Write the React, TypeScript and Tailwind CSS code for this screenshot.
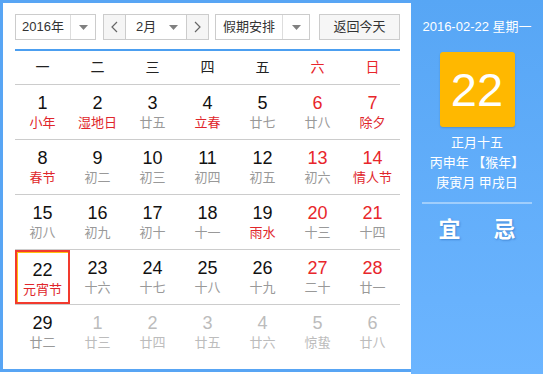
import React from 'react';

type Day = {
  num: number;
  lunar: string;
  weekend?: boolean;
  festival?: boolean;
  other?: boolean;
  selected?: boolean;
};

const weekdays = ['一', '二', '三', '四', '五', '六', '日'];

const rows: Day[][] = [
  [
    { num: 1, lunar: '小年', festival: true },
    { num: 2, lunar: '湿地日', festival: true },
    { num: 3, lunar: '廿五' },
    { num: 4, lunar: '立春', festival: true },
    { num: 5, lunar: '廿七' },
    { num: 6, lunar: '廿八', weekend: true },
    { num: 7, lunar: '除夕', weekend: true, festival: true },
  ],
  [
    { num: 8, lunar: '春节', festival: true },
    { num: 9, lunar: '初二' },
    { num: 10, lunar: '初三' },
    { num: 11, lunar: '初四' },
    { num: 12, lunar: '初五' },
    { num: 13, lunar: '初六', weekend: true },
    { num: 14, lunar: '情人节', weekend: true, festival: true },
  ],
  [
    { num: 15, lunar: '初八' },
    { num: 16, lunar: '初九' },
    { num: 17, lunar: '初十' },
    { num: 18, lunar: '十一' },
    { num: 19, lunar: '雨水', festival: true },
    { num: 20, lunar: '十三', weekend: true },
    { num: 21, lunar: '十四', weekend: true },
  ],
  [
    { num: 22, lunar: '元宵节', festival: true, selected: true },
    { num: 23, lunar: '十六' },
    { num: 24, lunar: '十七' },
    { num: 25, lunar: '十八' },
    { num: 26, lunar: '十九' },
    { num: 27, lunar: '二十', weekend: true },
    { num: 28, lunar: '廿一', weekend: true },
  ],
  [
    { num: 29, lunar: '廿二' },
    { num: 1, lunar: '廿三', other: true },
    { num: 2, lunar: '廿四', other: true },
    { num: 3, lunar: '廿五', other: true },
    { num: 4, lunar: '廿六', other: true },
    { num: 5, lunar: '惊蛰', other: true },
    { num: 6, lunar: '廿八', other: true },
  ],
];

function Caret() {
  return (
    <svg width="9" height="5" viewBox="0 0 9 5">
      <path d="M0 0 L9 0 L4.5 5 Z" fill="#808080" />
    </svg>
  );
}

function Chevron({ dir }: { dir: 'left' | 'right' }) {
  return (
    <svg width="7" height="12" viewBox="0 0 7 12">
      <path
        d={dir === 'left' ? 'M6 1 L1 6 L6 11' : 'M1 1 L6 6 L1 11'}
        fill="none"
        stroke="#666"
        strokeWidth="1.2"
      />
    </svg>
  );
}

function DayCell({ day }: { day: Day }) {
  let numColor = 'text-[#111]';
  if (day.weekend) numColor = 'text-[#e8262b]';
  if (day.other) numColor = 'text-[#bcbcbc]';

  let lunarColor = 'text-[#999]';
  if (day.festival) lunarColor = 'text-[#e0262b]';
  if (day.other) lunarColor = 'text-[#bcbcbc]';

  return (
    <div
      className={`flex flex-col items-center pt-[8px] ${
        day.selected ? 'border-2 border-[#f23a2e] shadow-[inset_1px_1px_0_0_#ffc20e] pt-[6px]' : ''
      }`}
    >
      <span className={`text-[18px] leading-[21px] ${numColor}`}>{day.num}</span>
      <span className={`text-[13px] leading-[18px] ${lunarColor}`}>{day.lunar}</span>
    </div>
  );
}

export default function App() {
  return (
    <div
      className="w-[543px] h-[374px] flex bg-white"
      style={{ fontFamily: '"Liberation Sans", "Noto Sans CJK SC", sans-serif' }}
    >
      {/* Left: calendar */}
      <div className="w-[411px] h-[372px] border-l-[3px] border-t-[3px] border-b-[3px] border-[#58a5f4] pl-[12px] pt-[11px]">
        <div className="w-[385px]">
          {/* Toolbar */}
          <div className="flex items-center h-[26px] text-[13px] text-[#333]">
            <div className="flex h-full border border-[#ccc] bg-white">
              <div className="w-[54px] flex items-center justify-center">2016年</div>
              <div className="w-[25px] border-l border-[#ddd] flex items-center justify-center">
                <Caret />
              </div>
            </div>

            <div className="flex h-full border border-[#ccc] ml-[7px]">
              <div className="w-[22px] bg-[#f5f5f5] flex items-center justify-center border-r border-[#ccc]">
                <Chevron dir="left" />
              </div>
              <div className="w-[60px] bg-white flex items-center">
                <span className="ml-[10px]">2月</span>
                <span className="ml-auto mr-[8px] flex">
                  <Caret />
                </span>
              </div>
              <div className="w-[22px] bg-[#f5f5f5] flex items-center justify-center border-l border-[#ccc]">
                <Chevron dir="right" />
              </div>
            </div>

            <div className="flex h-full border border-[#ccc] ml-[6px] bg-white">
              <div className="w-[66px] flex items-center justify-center">假期安排</div>
              <div className="w-[27px] border-l border-[#ddd] flex items-center justify-center">
                <Caret />
              </div>
            </div>

            <div className="h-full w-[82px] ml-[9px] border border-[#ccc] bg-[#f6f6f6] flex items-center justify-center">
              返回今天
            </div>
          </div>

          <div className="h-[2px] bg-[#4c9ff0] mt-[9px]" />

          {/* Weekday header */}
          <div className="grid grid-cols-7 h-[34px] border-b border-[#ccc] text-[14px] items-center">
            {weekdays.map((w, i) => (
              <div
                key={w}
                className={`text-center ${i >= 5 ? 'text-[#e8262b]' : 'text-[#222]'}`}
              >
                {w}
              </div>
            ))}
          </div>

          {/* Days */}
          {rows.map((row, ri) => (
            <div
              key={ri}
              className={`grid grid-cols-7 h-[55px] ${
                ri < rows.length - 1 ? 'border-b border-[#ccc]' : ''
              }`}
            >
              {row.map((d, di) => (
                <DayCell key={di} day={d} />
              ))}
            </div>
          ))}
        </div>
      </div>

      {/* Right: today panel */}
      <div className="w-[132px] h-full bg-gradient-to-b from-[#57a6f5] to-[#6cb5ff] flex flex-col items-center text-white">
        <div className="mt-[18px] text-[13px] leading-[18px]">2016-02-22 星期一</div>
        <div className="mt-[16px] w-[75px] h-[75px] rounded-[3px] bg-[#ffb800] shadow-[0_1px_2px_rgba(0,0,0,0.15)] flex items-center justify-center">
          <span className="text-[47px] leading-none">22</span>
        </div>
        <div className="mt-[6px] text-[13px] leading-[20px] text-center">
          <div>正月十五</div>
          <div>丙申年 【猴年】</div>
          <div>庚寅月 甲戌日</div>
        </div>
        <div className="mt-[9px] w-[110px] h-[2px] bg-white/40" />
        <div className="mt-[12px] flex gap-[33px] text-[22px] font-bold leading-[28px] [text-shadow:1px_1px_2px_rgba(0,60,140,0.35)]">
          <span>宜</span>
          <span>忌</span>
        </div>
      </div>
    </div>
  );
}
